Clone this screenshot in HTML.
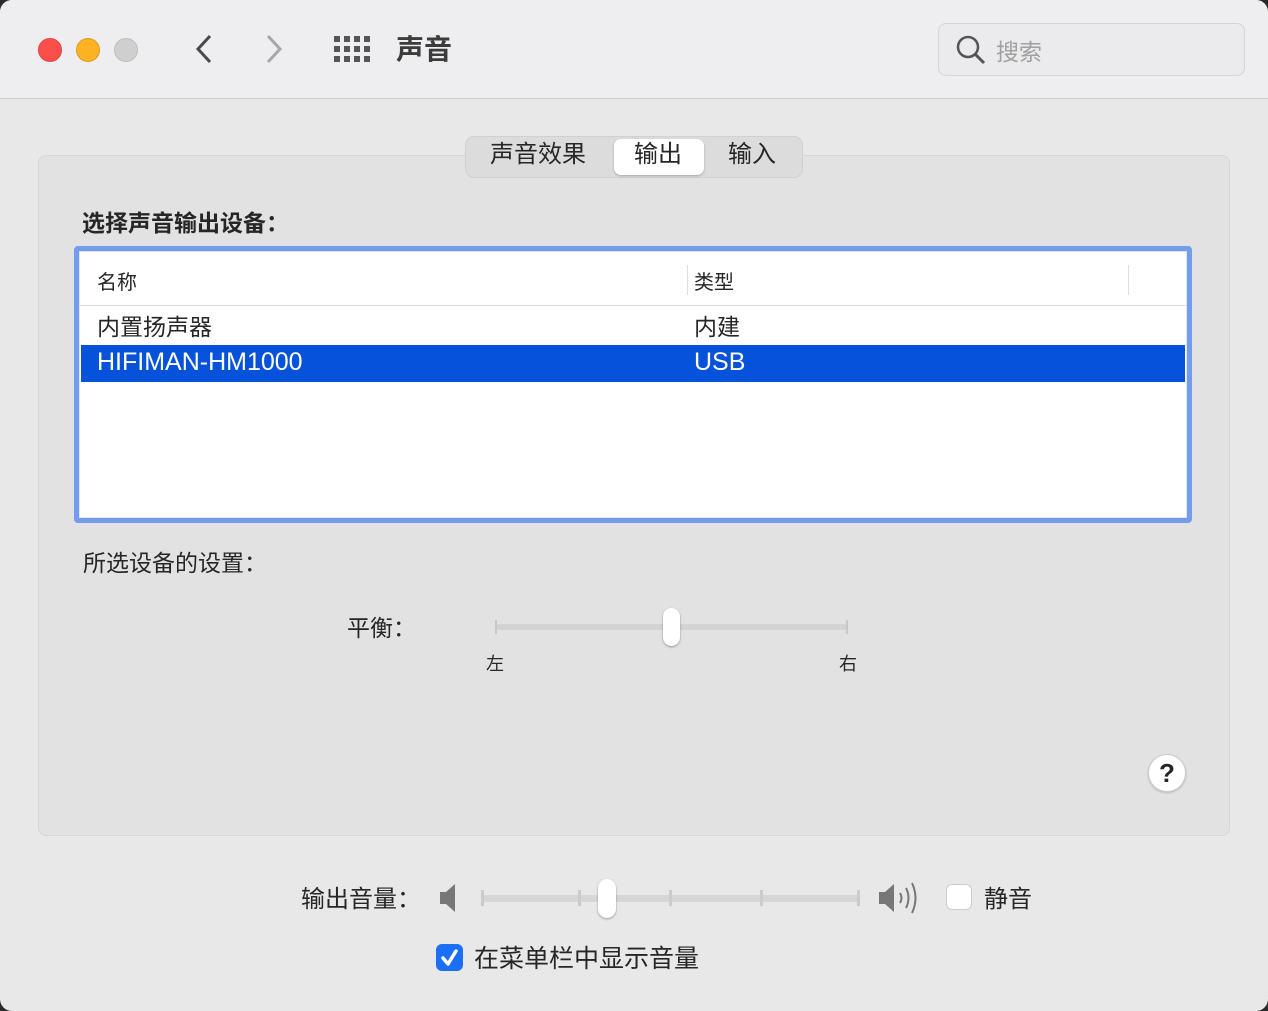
<!DOCTYPE html>
<html><head><meta charset="utf-8"><style>
*{margin:0;padding:0;box-sizing:border-box}
body{width:1268px;height:1011px;background:#2a2a2a;font-family:"Liberation Sans","Noto Sans CJK SC",sans-serif;color:#262626;overflow:hidden;position:relative}
.win{position:absolute;left:0;top:0;width:1268px;height:1011px;background:#e8e8e8;border-radius:12px;overflow:hidden}
.title{position:absolute;left:0;top:0;width:1268px;height:99px;background:#eeeef0;border-bottom:1px solid #cfcfcf}
.dot{position:absolute;top:38px;width:24px;height:24px;border-radius:50%}
.abs{position:absolute}
.panel{position:absolute;left:38px;top:155px;width:1192px;height:681px;background:#e2e2e2;border:1px solid #d6d6d6;border-radius:8px}
.seg{position:absolute;left:465px;top:136px;width:338px;height:42px;background:#dcdcdc;border:1px solid #d0d0d0;border-radius:9px}
.seg span{position:absolute;top:2px;font-size:24px;line-height:32px}
.sel{position:absolute;left:148px;top:2px;width:90px;height:36px;background:#fff;border-radius:7px;box-shadow:0 1px 2px rgba(0,0,0,.25)}
.table{position:absolute;left:74px;top:246px;width:1118px;height:277px;border:5px solid #739cec;border-radius:4px;background:#fff;box-shadow:inset 0 0 0 1px #dfe7f7}
.t{position:absolute;white-space:nowrap}
</style></head><body>
<div class="win">
<div class="title">
 <div class="dot" style="left:38px;background:#fc4f4b;border:1px solid #e0443e"></div>
 <div class="dot" style="left:76px;background:#fdb224;border:1px solid #de9b1c"></div>
 <div class="dot" style="left:114px;background:#cfcfcf;border:1px solid #bdbdbd"></div>
 <svg class="abs" style="left:190px;top:32px" width="30" height="34"><path d="M20 4 L8 17 L20 30" stroke="#4a4a4a" stroke-width="3" fill="none"/></svg>
 <svg class="abs" style="left:260px;top:32px" width="30" height="34"><path d="M8 4 L20 17 L8 30" stroke="#a8a8a8" stroke-width="3" fill="none"/></svg>
 <svg class="abs" style="left:334px;top:36px" width="36" height="26" fill="#555">
  <rect x="0" y="0" width="6" height="6"/><rect x="10" y="0" width="6" height="6"/><rect x="20" y="0" width="6" height="6"/><rect x="30" y="0" width="6" height="6"/>
  <rect x="0" y="10" width="6" height="6"/><rect x="10" y="10" width="6" height="6"/><rect x="20" y="10" width="6" height="6"/><rect x="30" y="10" width="6" height="6"/>
  <rect x="0" y="20" width="6" height="6"/><rect x="10" y="20" width="6" height="6"/><rect x="20" y="20" width="6" height="6"/><rect x="30" y="20" width="6" height="6"/>
 </svg>
 <div class="t" style="left:396px;top:28px;font-size:28px;color:#3c3c3c;font-weight:bold">声音</div>
 <div class="abs" style="left:938px;top:23px;width:307px;height:53px;border:1px solid #d4d4d4;border-radius:8px;background:#ebebed"></div>
 <svg class="abs" style="left:954px;top:33px" width="34" height="34"><circle cx="14" cy="14" r="10" stroke="#555" stroke-width="2.5" fill="none"/><path d="M21 21 L30 30" stroke="#555" stroke-width="3"/></svg>
 <div class="t" style="left:996px;top:33px;font-size:23px;color:#a0a0a0">搜索</div>
</div>
<div class="panel"></div>
<div class="seg"><div class="sel"></div>
 <span style="left:24px">声音效果</span><span style="left:168px">输出</span><span style="left:262px">输入</span></div>
<div class="t" style="left:82px;top:204px;font-size:23px;font-weight:bold">选择声音输出设备：</div>
<div class="table">
 <div class="t" style="left:18px;top:15px;font-size:20px">名称</div>
 <div class="abs" style="left:608px;top:14px;width:1px;height:30px;background:#ddd"></div>
 <div class="t" style="left:615px;top:15px;font-size:20px">类型</div>
 <div class="abs" style="left:1049px;top:14px;width:1px;height:30px;background:#ddd"></div>
 <div class="abs" style="left:0;top:54px;width:1108px;height:1px;background:#ddd"></div>
 <div class="t" style="left:18px;top:57px;font-size:23px">内置扬声器</div>
 <div class="t" style="left:615px;top:57px;font-size:23px">内建</div>
 <div class="abs" style="left:2px;top:94px;width:1104px;height:37px;background:#0752da"></div>
 <div class="t" style="left:18px;top:97px;font-size:25px;color:#fff">HIFIMAN-HM1000</div>
 <div class="t" style="left:615px;top:97px;font-size:25px;color:#fff">USB</div>
</div>
<div class="t" style="left:83px;top:544px;font-size:23px">所选设备的设置：</div>
<div class="t" style="left:347px;top:609px;font-size:23px">平衡：</div>
<div class="abs" style="left:496px;top:624px;width:352px;height:6px;background:#d3d3d3;border-radius:3px"></div>
<div class="abs" style="left:495px;top:620px;width:2px;height:14px;background:#c8c8c8"></div>
<div class="abs" style="left:846px;top:620px;width:2px;height:14px;background:#c8c8c8"></div>
<div class="abs" style="left:663px;top:608px;width:17px;height:38px;background:#fff;border-radius:9px;box-shadow:0 1px 2px rgba(0,0,0,.35)"></div>
<div class="t" style="left:486px;top:650px;font-size:18px">左</div>
<div class="t" style="left:839px;top:650px;font-size:18px">右</div>
<div class="abs" style="left:1148px;top:754px;width:38px;height:38px;border-radius:50%;background:#fff;border:1px solid #ccc;box-shadow:0 1px 2px rgba(0,0,0,.2);text-align:center;font-size:26px;line-height:36px;font-weight:bold">?</div>
<div class="t" style="left:301px;top:879px;font-size:24px">输出音量：</div>
<svg class="abs" style="left:438px;top:881px" width="24" height="34"><path d="M2 11 H8 L17 3 V31 L8 23 H2 Z" fill="#777"/></svg>
<div class="abs" style="left:482px;top:895px;width:378px;height:7px;background:#d6d6d6;border-radius:3px"></div>
<div class="abs" style="left:481px;top:890px;width:3px;height:16px;background:#cbcbcb"></div>
<div class="abs" style="left:578px;top:890px;width:3px;height:16px;background:#cbcbcb"></div>
<div class="abs" style="left:669px;top:890px;width:3px;height:16px;background:#cbcbcb"></div>
<div class="abs" style="left:760px;top:890px;width:3px;height:16px;background:#cbcbcb"></div>
<div class="abs" style="left:857px;top:890px;width:3px;height:16px;background:#cbcbcb"></div>
<div class="abs" style="left:598px;top:879px;width:18px;height:39px;background:#fff;border-radius:9px;box-shadow:0 1px 2px rgba(0,0,0,.35)"></div>
<svg class="abs" style="left:877px;top:879px" width="46" height="38"><path d="M2 13 H8 L17 5 V33 L8 25 H2 Z" fill="#777"/><path d="M23 14 Q26 19 23 24 M29 9 Q34 19 29 29 M35 4 Q42 19 35 34" stroke="#777" stroke-width="2" fill="none"/></svg>
<div class="abs" style="left:946px;top:884px;width:26px;height:26px;background:#fff;border:1px solid #ccc;border-radius:6px"></div>
<div class="t" style="left:984px;top:879px;font-size:24px">静音</div>
<div class="abs" style="left:436px;top:944px;width:27px;height:27px;background:#1a6ff5;border-radius:6px"></div>
<svg class="abs" style="left:436px;top:944px" width="27" height="27"><path d="M7 14 L12 20 L20 7" stroke="#fff" stroke-width="3.5" fill="none" stroke-linecap="round" stroke-linejoin="round"/></svg>
<div class="t" style="left:474px;top:939px;font-size:25px">在菜单栏中显示音量</div>
</div>
</body></html>
